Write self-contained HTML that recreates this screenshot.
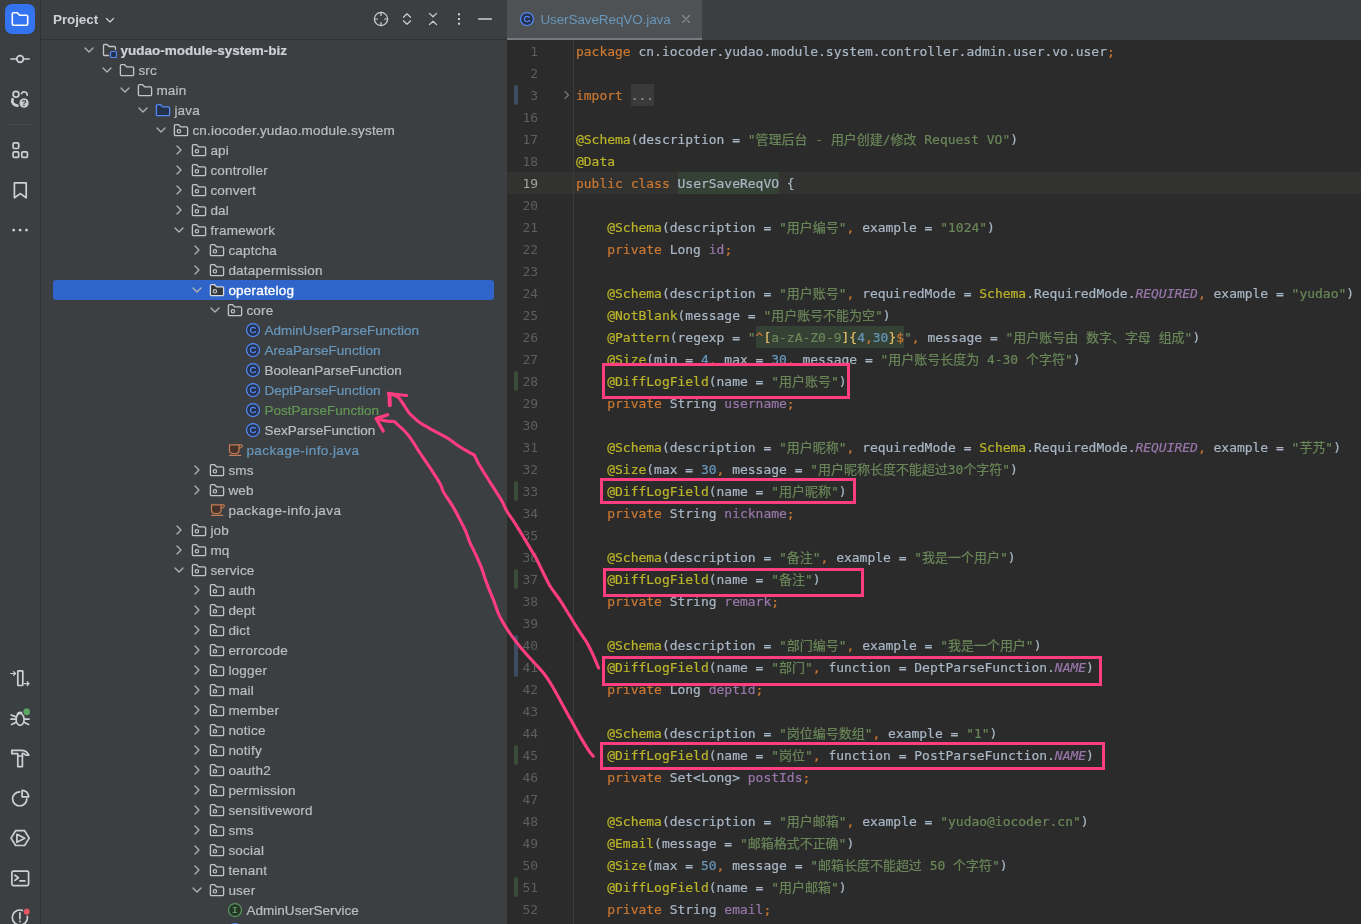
<!DOCTYPE html>
<html lang="zh"><head><meta charset="utf-8"><title>UserSaveReqVO.java</title>
<style>
html,body{margin:0;padding:0}
body{width:1361px;height:924px;overflow:hidden;background:#3c3f41;position:relative;font-family:"Liberation Sans","Noto Sans CJK SC",sans-serif;font-size:13.5px;color:#bbbdc0}
#strip{will-change:transform;position:absolute;left:0;top:0;width:40px;height:924px;background:#3c3f41;border-right:1px solid #323232}
.act{position:absolute;left:5px;top:4px;width:30px;height:30px;border-radius:7px;background:#3574f0}
.si{position:absolute;left:10px;width:20px;height:20px}
.sep{position:absolute;left:8px;top:124px;width:24px;height:1px;background:#484b4e}
#proj{will-change:transform;position:absolute;left:41px;top:0;width:466px;height:924px;background:#3c3f41;overflow:hidden}
#hdr{position:absolute;left:0;top:0;width:466px;height:39px;border-bottom:1px solid #323232}
#hdr .title{position:absolute;left:12px;top:0;line-height:39px;font-weight:bold;font-size:13.5px;color:#ced0d6;letter-spacing:-.1px}
.hi{position:absolute;top:11.4px;width:16px;height:16px;margin-left:-41px}
.row{position:absolute;left:-41px;width:560px;height:20px}
.row span{position:absolute;top:0;height:20px}
.chw{width:16px}.icw{width:16px}
.ch,.ic{position:absolute;left:0;top:2px;width:16px;height:16px}
.t{-webkit-text-stroke:.22px currentColor;line-height:22px;white-space:nowrap;color:#bbbdc0;letter-spacing:.2px}
.t.cc{letter-spacing:.04px}.t.jf{letter-spacing:.42px}
.t.b{font-weight:bold;letter-spacing:0;color:#ced0d6}
.t.blue{color:#6897bb}.t.green{color:#629755}.t.sel{color:#fff;-webkit-text-stroke:.35px #fff}
.selbg{position:absolute;left:12px;width:441px;height:20px;background:#2f65ca;border-radius:3px}
#ed{will-change:transform;position:absolute;left:507px;top:0;width:854px;height:924px;background:#2b2b2b;overflow:hidden}
#tabs{position:absolute;left:0;top:0;width:854px;height:40px;background:#3c3f41}
#tab{position:absolute;left:0;top:0;width:195px;height:38px;background:#4e5254;border-bottom:2px solid #747a80}
#tab .ic{left:12px;top:11px}
#tab .nm{position:absolute;left:33.4px;top:0;line-height:39px;color:#6897bb;letter-spacing:-.1px;white-space:nowrap}
#tab .x{position:absolute;left:172px;top:12px;width:14px;height:14px}
#curline{position:absolute;left:0;top:172px;width:854px;height:22px;background:#323330}
#vline{position:absolute;left:66px;top:40px;width:1px;height:884px;background:#3a3a3a}
.ln{position:absolute;left:0;width:31px;text-align:right;height:22px;line-height:22px;padding-top:1px;font-family:"DejaVu Sans Mono","Liberation Mono",monospace;font-size:12.97px;color:#5c5f62}
.ln.cur{color:#a4a3a3}
.vm{position:absolute;left:7.4px;width:3.5px;height:20px;border-radius:2px}
.vm.g{background:#384c38}.vm.bl{background:#3d4b63}
.cl{-webkit-text-stroke:.2px currentColor;position:absolute;left:69px;height:22px;line-height:22px;padding-top:1px;white-space:pre;font-family:"DejaVu Sans Mono","Liberation Mono","Noto Sans CJK SC",monospace;font-size:12.97px;color:#a9b7c6}
.cl.top{z-index:3}
.k{color:#cc7832}.a{color:#bbb529}.s{color:#6a8759}.n{color:#6897bb}.f{color:#9876aa}.c{color:#9876aa;font-style:italic}
.rx{background:#364135;display:inline-block;height:22px;vertical-align:top;margin-top:-1px;padding-top:1px;box-sizing:border-box}.rb{color:#e8bf6a}
.hl{background:#344134;display:inline-block;height:22px;vertical-align:top;margin-top:-1px;padding-top:1px;box-sizing:border-box}
.fold{background:#3a3a3a;color:#8c8c8c;display:inline-block;height:22px;vertical-align:top;margin-top:-1px;padding-top:1px;box-sizing:border-box}
.box{position:absolute;z-index:2;box-sizing:border-box;border:3.4px solid #ff3d7f;background:#2b2b2b;margin-left:-507px}
#arrows{position:absolute;left:0;top:0;width:1361px;height:924px;z-index:10;pointer-events:none}
.fc{position:absolute;left:52px;top:87px;width:16px;height:16px}
</style></head><body>
<div id="strip"><div class="act"></div><svg class="si" style="top:9px" viewBox="0 0 20 20" fill="none" stroke="#fff" stroke-width="1.6" stroke-linejoin="round"><path d="M2.3 5.1a1.3 1.3 0 0 1 1.3-1.3h3.7l2.3 2.4h6.8a1.3 1.3 0 0 1 1.3 1.3v7.4a1.3 1.3 0 0 1-1.3 1.3H3.6a1.3 1.3 0 0 1-1.3-1.3z"/></svg><svg class="si" style="top:49px" viewBox="0 0 20 20" fill="none" stroke="#ced0d6" stroke-width="1.7" stroke-linecap="round" stroke-linejoin="round"><circle cx="10.1" cy="10" r="3.3"/><path d="M1 10h5.6M13.6 10h5.6"/></svg><svg class="si" style="top:89px" viewBox="0 0 20 20" fill="none" stroke="#ced0d6" stroke-width="1.7" stroke-linecap="round" stroke-linejoin="round"><circle cx="6" cy="5.2" r="2.9"/><path d="M11.5 4.6A3 3 0 0 1 17.2 6.2"/><path d="M2.6 10.2C1.4 13.6 3.8 16.6 7.4 16.7" stroke-width="2.7"/><circle cx="14.1" cy="14" r="5.2" fill="#c9cbcf" stroke="#3c3f41" stroke-width="1"/><text x="14.1" y="17" text-anchor="middle" font-family="Liberation Sans, sans-serif" font-weight="bold" font-size="8.5" fill="#3c3f41" stroke="none">?</text></svg><div class="sep"></div><svg class="si" style="top:140px" viewBox="0 0 20 20" fill="none" stroke="#ced0d6" stroke-width="1.7" stroke-linecap="round" stroke-linejoin="round"><rect x="3.1" y="2.9" width="5.6" height="5.6" rx="1.2"/><rect x="3.1" y="11.8" width="5.6" height="5.6" rx="1.2"/><rect x="11.8" y="11.8" width="5.6" height="5.6" rx="1.2"/></svg><svg class="si" style="top:180px" viewBox="0 0 20 20" fill="none" stroke="#ced0d6" stroke-width="1.7" stroke-linecap="round" stroke-linejoin="round"><path d="M4.4 2.8h11.8v15l-5.9-4.2-5.9 4.2z"/></svg><svg class="si" style="top:220px" viewBox="0 0 20 20" fill="#ced0d6"><circle cx="3.7" cy="10.1" r="1.45"/><circle cx="10.1" cy="10.1" r="1.45"/><circle cx="16.5" cy="10.1" r="1.45"/></svg><svg class="si" style="top:667.5px" viewBox="0 0 20 20" fill="none" stroke="#ced0d6" stroke-width="1.7" stroke-linecap="round" stroke-linejoin="round"><rect x="7.8" y="2.9" width="5" height="14.6" rx="0.6"/><path d="M0.8 5.5h4.6M3.6 3.6l1.9 1.9-1.9 1.9" stroke-width="1.2"/><path d="M14.4 15.6h4.6M17.2 13.7l1.9 1.9-1.9 1.9" stroke-width="1.2"/></svg><svg class="si" style="top:707.5px" viewBox="0 0 20 20" fill="none" stroke="#ced0d6" stroke-width="1.7" stroke-linecap="round" stroke-linejoin="round"><ellipse cx="10.1" cy="11.4" rx="4" ry="6"/><path d="M7.4 6.4a2.9 2.9 0 0 1 4.4-1.4"/><path d="M1.2 7l4.2 1.6M1 11.2h4.6M1.6 16.4l4.2-1.9M14.8 11.2h4.2M14.6 14.5l4 1.9"/><circle cx="16.6" cy="3.8" r="3.9" fill="#5aa861" stroke="#3c3f41" stroke-width="1"/></svg><svg class="si" style="top:747.5px" viewBox="0 0 20 20" fill="none" stroke="#ced0d6" stroke-width="1.7" stroke-linecap="round" stroke-linejoin="round"><path d="M1.8 2.4h9.6c3.6 0 6 1.6 7.4 4.8h-3.2c-.8-1.4-1.8-1.8-3.2-1.8v2.6H7.8V5.6h-6z"/><path d="M7.8 8v10.6h4.6V8"/></svg><svg class="si" style="top:787.5px" viewBox="0 0 20 20" fill="none" stroke="#ced0d6" stroke-width="1.7" stroke-linecap="round" stroke-linejoin="round"><path d="M9.7 3.8A7.1 7.1 0 1 0 16.8 10.9"/><path d="M12.1 2.3A6.5 6.5 0 0 1 18.6 8.8H12.1z"/></svg><svg class="si" style="top:827.5px" viewBox="0 0 20 20" fill="none" stroke="#ced0d6" stroke-width="1.7" stroke-linecap="round" stroke-linejoin="round"><path d="M5.6 2.7h9l4.6 7.4-4.6 7.4h-9L1 10.1z"/><path d="M6.9 6.3v8l7.8-4z"/></svg><svg class="si" style="top:867.5px" viewBox="0 0 20 20" fill="none" stroke="#ced0d6" stroke-width="1.7" stroke-linecap="round" stroke-linejoin="round"><rect x="1.9" y="3.2" width="16.7" height="14.4" rx="1.5"/><path d="M4.9 7.2l3.5 2.6-3.5 2.6M10 12.9h4.8"/></svg><svg class="si" style="top:907.5px" viewBox="0 0 20 20" fill="none" stroke="#ced0d6" stroke-width="1.7" stroke-linecap="round" stroke-linejoin="round"><circle cx="9.9" cy="9.6" r="7.6"/><path d="M9.9 4.9v5.8" stroke-width="1.7"/><circle cx="9.9" cy="13.5" r="1" fill="#ced0d6" stroke="none"/><circle cx="16.8" cy="3.7" r="3.6" fill="#e55765" stroke="#3c3f41" stroke-width="1"/></svg></div>
<div id="proj">
<div id="hdr"><span class="title">Project</span>
<svg style="position:absolute;left:61px;top:12px;width:16px;height:16px" viewBox="0 0 16 16"><path d="M4.5 6.5L8 10l3.5-3.5" fill="none" stroke="#ced0d6" stroke-width="1.2" stroke-linecap="round" stroke-linejoin="round"/></svg>
<svg class="hi" style="left:373px" viewBox="0 0 16 16" fill="none" stroke="#ced0d6" stroke-width="1.2" stroke-linecap="round" stroke-linejoin="round"><circle cx="8" cy="8" r="6.6"/><path d="M8 1.4v3M8 11.6v3M1.4 8h3M11.6 8h3"/></svg><svg class="hi" style="left:399px" viewBox="0 0 16 16" fill="none" stroke="#ced0d6" stroke-width="1.2" stroke-linecap="round" stroke-linejoin="round"><path d="M4.4 6.2L8 2.8l3.6 3.4M4.4 9.8L8 13.2l3.6-3.4"/></svg><svg class="hi" style="left:425px" viewBox="0 0 16 16" fill="none" stroke="#ced0d6" stroke-width="1.2" stroke-linecap="round" stroke-linejoin="round"><path d="M4.4 2.4L8 5.8l3.6-3.4M4.4 13.6L8 10.2l3.6 3.4"/></svg><svg class="hi" style="left:451.2px" viewBox="0 0 16 16" fill="#ced0d6"><rect x="7" y="2.3" width="2" height="2"/><rect x="7" y="7" width="2" height="2"/><rect x="7" y="11.7" width="2" height="2"/></svg><svg class="hi" style="left:477px" viewBox="0 0 16 16" fill="none" stroke="#ced0d6" stroke-width="1.3" stroke-linecap="round" stroke-linejoin="round"><path d="M1.6 8h12.8"/></svg></div>
<div class="row" style="top:40px"><span class="chw" style="left:80.7px"><svg class="ch" viewBox="0 0 16 16"><path d="M4 6l4 4 4-4" fill="none" stroke="#aeb0b4" stroke-width="1.35" stroke-linecap="round" stroke-linejoin="round"/></svg></span><span class="icw" style="left:101.3px"><svg class="ic" viewBox="0 0 16 16"><path d="M8 13.5H3.5a1 1 0 0 1-1-1v-9a1 1 0 0 1 1-1h2.7l1.9 2h5.4a1 1 0 0 1 1 1V8" fill="none" stroke="#c3c5c9" stroke-width="1.3" stroke-linejoin="round"/><rect x="9.5" y="9.5" width="6" height="6" rx="1.2" fill="#25324d" stroke="#548af7" stroke-width="1.2"/></svg></span><span class="t b" style="left:120.4px">yudao-module-system-biz</span></div>
<div class="row" style="top:60px"><span class="chw" style="left:98.7px"><svg class="ch" viewBox="0 0 16 16"><path d="M4 6l4 4 4-4" fill="none" stroke="#aeb0b4" stroke-width="1.35" stroke-linecap="round" stroke-linejoin="round"/></svg></span><span class="icw" style="left:119.3px"><svg class="ic" viewBox="0 0 16 16"><path d="M1.4 3.9a1.2 1.2 0 0 1 1.2-1.2h3l2 2.2h5.8a1.2 1.2 0 0 1 1.2 1.2v6.3a1.2 1.2 0 0 1-1.2 1.2H2.6a1.2 1.2 0 0 1-1.2-1.2z" fill="none" stroke="#c3c5c9" stroke-width="1.3" stroke-linejoin="round"/></svg></span><span class="t" style="left:138.4px">src</span></div>
<div class="row" style="top:80px"><span class="chw" style="left:116.7px"><svg class="ch" viewBox="0 0 16 16"><path d="M4 6l4 4 4-4" fill="none" stroke="#aeb0b4" stroke-width="1.35" stroke-linecap="round" stroke-linejoin="round"/></svg></span><span class="icw" style="left:137.3px"><svg class="ic" viewBox="0 0 16 16"><path d="M1.4 3.9a1.2 1.2 0 0 1 1.2-1.2h3l2 2.2h5.8a1.2 1.2 0 0 1 1.2 1.2v6.3a1.2 1.2 0 0 1-1.2 1.2H2.6a1.2 1.2 0 0 1-1.2-1.2z" fill="none" stroke="#c3c5c9" stroke-width="1.3" stroke-linejoin="round"/></svg></span><span class="t" style="left:156.4px">main</span></div>
<div class="row" style="top:100px"><span class="chw" style="left:134.7px"><svg class="ch" viewBox="0 0 16 16"><path d="M4 6l4 4 4-4" fill="none" stroke="#aeb0b4" stroke-width="1.35" stroke-linecap="round" stroke-linejoin="round"/></svg></span><span class="icw" style="left:155.3px"><svg class="ic" viewBox="0 0 16 16"><path d="M1.4 3.9a1.2 1.2 0 0 1 1.2-1.2h3l2 2.2h5.8a1.2 1.2 0 0 1 1.2 1.2v6.3a1.2 1.2 0 0 1-1.2 1.2H2.6a1.2 1.2 0 0 1-1.2-1.2z" fill="#25324d" stroke="#548af7" stroke-width="1.3" stroke-linejoin="round"/></svg></span><span class="t" style="left:174.4px">java</span></div>
<div class="row" style="top:120px"><span class="chw" style="left:152.7px"><svg class="ch" viewBox="0 0 16 16"><path d="M4 6l4 4 4-4" fill="none" stroke="#aeb0b4" stroke-width="1.35" stroke-linecap="round" stroke-linejoin="round"/></svg></span><span class="icw" style="left:173.3px"><svg class="ic" viewBox="0 0 16 16"><path d="M1.4 3.9a1.2 1.2 0 0 1 1.2-1.2h3l2 2.2h5.8a1.2 1.2 0 0 1 1.2 1.2v6.3a1.2 1.2 0 0 1-1.2 1.2H2.6a1.2 1.2 0 0 1-1.2-1.2z" fill="none" stroke="#c3c5c9" stroke-width="1.3" stroke-linejoin="round"/><circle cx="5.9" cy="9.3" r="1.7" fill="none" stroke="#c3c5c9" stroke-width="1.2"/></svg></span><span class="t" style="left:192.4px">cn.iocoder.yudao.module.system</span></div>
<div class="row" style="top:140px"><span class="chw" style="left:170.7px"><svg class="ch" viewBox="0 0 16 16"><path d="M6 4l4 4-4 4" fill="none" stroke="#aeb0b4" stroke-width="1.35" stroke-linecap="round" stroke-linejoin="round"/></svg></span><span class="icw" style="left:191.3px"><svg class="ic" viewBox="0 0 16 16"><path d="M1.4 3.9a1.2 1.2 0 0 1 1.2-1.2h3l2 2.2h5.8a1.2 1.2 0 0 1 1.2 1.2v6.3a1.2 1.2 0 0 1-1.2 1.2H2.6a1.2 1.2 0 0 1-1.2-1.2z" fill="none" stroke="#c3c5c9" stroke-width="1.3" stroke-linejoin="round"/><circle cx="5.9" cy="9.3" r="1.7" fill="none" stroke="#c3c5c9" stroke-width="1.2"/></svg></span><span class="t" style="left:210.4px">api</span></div>
<div class="row" style="top:160px"><span class="chw" style="left:170.7px"><svg class="ch" viewBox="0 0 16 16"><path d="M6 4l4 4-4 4" fill="none" stroke="#aeb0b4" stroke-width="1.35" stroke-linecap="round" stroke-linejoin="round"/></svg></span><span class="icw" style="left:191.3px"><svg class="ic" viewBox="0 0 16 16"><path d="M1.4 3.9a1.2 1.2 0 0 1 1.2-1.2h3l2 2.2h5.8a1.2 1.2 0 0 1 1.2 1.2v6.3a1.2 1.2 0 0 1-1.2 1.2H2.6a1.2 1.2 0 0 1-1.2-1.2z" fill="none" stroke="#c3c5c9" stroke-width="1.3" stroke-linejoin="round"/><circle cx="5.9" cy="9.3" r="1.7" fill="none" stroke="#c3c5c9" stroke-width="1.2"/></svg></span><span class="t" style="left:210.4px">controller</span></div>
<div class="row" style="top:180px"><span class="chw" style="left:170.7px"><svg class="ch" viewBox="0 0 16 16"><path d="M6 4l4 4-4 4" fill="none" stroke="#aeb0b4" stroke-width="1.35" stroke-linecap="round" stroke-linejoin="round"/></svg></span><span class="icw" style="left:191.3px"><svg class="ic" viewBox="0 0 16 16"><path d="M1.4 3.9a1.2 1.2 0 0 1 1.2-1.2h3l2 2.2h5.8a1.2 1.2 0 0 1 1.2 1.2v6.3a1.2 1.2 0 0 1-1.2 1.2H2.6a1.2 1.2 0 0 1-1.2-1.2z" fill="none" stroke="#c3c5c9" stroke-width="1.3" stroke-linejoin="round"/><circle cx="5.9" cy="9.3" r="1.7" fill="none" stroke="#c3c5c9" stroke-width="1.2"/></svg></span><span class="t" style="left:210.4px">convert</span></div>
<div class="row" style="top:200px"><span class="chw" style="left:170.7px"><svg class="ch" viewBox="0 0 16 16"><path d="M6 4l4 4-4 4" fill="none" stroke="#aeb0b4" stroke-width="1.35" stroke-linecap="round" stroke-linejoin="round"/></svg></span><span class="icw" style="left:191.3px"><svg class="ic" viewBox="0 0 16 16"><path d="M1.4 3.9a1.2 1.2 0 0 1 1.2-1.2h3l2 2.2h5.8a1.2 1.2 0 0 1 1.2 1.2v6.3a1.2 1.2 0 0 1-1.2 1.2H2.6a1.2 1.2 0 0 1-1.2-1.2z" fill="none" stroke="#c3c5c9" stroke-width="1.3" stroke-linejoin="round"/><circle cx="5.9" cy="9.3" r="1.7" fill="none" stroke="#c3c5c9" stroke-width="1.2"/></svg></span><span class="t" style="left:210.4px">dal</span></div>
<div class="row" style="top:220px"><span class="chw" style="left:170.7px"><svg class="ch" viewBox="0 0 16 16"><path d="M4 6l4 4 4-4" fill="none" stroke="#aeb0b4" stroke-width="1.35" stroke-linecap="round" stroke-linejoin="round"/></svg></span><span class="icw" style="left:191.3px"><svg class="ic" viewBox="0 0 16 16"><path d="M1.4 3.9a1.2 1.2 0 0 1 1.2-1.2h3l2 2.2h5.8a1.2 1.2 0 0 1 1.2 1.2v6.3a1.2 1.2 0 0 1-1.2 1.2H2.6a1.2 1.2 0 0 1-1.2-1.2z" fill="none" stroke="#c3c5c9" stroke-width="1.3" stroke-linejoin="round"/><circle cx="5.9" cy="9.3" r="1.7" fill="none" stroke="#c3c5c9" stroke-width="1.2"/></svg></span><span class="t" style="left:210.4px">framework</span></div>
<div class="row" style="top:240px"><span class="chw" style="left:188.7px"><svg class="ch" viewBox="0 0 16 16"><path d="M6 4l4 4-4 4" fill="none" stroke="#aeb0b4" stroke-width="1.35" stroke-linecap="round" stroke-linejoin="round"/></svg></span><span class="icw" style="left:209.3px"><svg class="ic" viewBox="0 0 16 16"><path d="M1.4 3.9a1.2 1.2 0 0 1 1.2-1.2h3l2 2.2h5.8a1.2 1.2 0 0 1 1.2 1.2v6.3a1.2 1.2 0 0 1-1.2 1.2H2.6a1.2 1.2 0 0 1-1.2-1.2z" fill="none" stroke="#c3c5c9" stroke-width="1.3" stroke-linejoin="round"/><circle cx="5.9" cy="9.3" r="1.7" fill="none" stroke="#c3c5c9" stroke-width="1.2"/></svg></span><span class="t" style="left:228.4px">captcha</span></div>
<div class="row" style="top:260px"><span class="chw" style="left:188.7px"><svg class="ch" viewBox="0 0 16 16"><path d="M6 4l4 4-4 4" fill="none" stroke="#aeb0b4" stroke-width="1.35" stroke-linecap="round" stroke-linejoin="round"/></svg></span><span class="icw" style="left:209.3px"><svg class="ic" viewBox="0 0 16 16"><path d="M1.4 3.9a1.2 1.2 0 0 1 1.2-1.2h3l2 2.2h5.8a1.2 1.2 0 0 1 1.2 1.2v6.3a1.2 1.2 0 0 1-1.2 1.2H2.6a1.2 1.2 0 0 1-1.2-1.2z" fill="none" stroke="#c3c5c9" stroke-width="1.3" stroke-linejoin="round"/><circle cx="5.9" cy="9.3" r="1.7" fill="none" stroke="#c3c5c9" stroke-width="1.2"/></svg></span><span class="t" style="left:228.4px">datapermission</span></div>
<div class="selbg" style="top:280px"></div>
<div class="row" style="top:280px"><span class="chw" style="left:188.7px"><svg class="ch" viewBox="0 0 16 16"><path d="M4 6l4 4 4-4" fill="none" stroke="#aeb0b4" stroke-width="1.35" stroke-linecap="round" stroke-linejoin="round"/></svg></span><span class="icw" style="left:209.3px"><svg class="ic" viewBox="0 0 16 16"><path d="M1.4 3.9a1.2 1.2 0 0 1 1.2-1.2h3l2 2.2h5.8a1.2 1.2 0 0 1 1.2 1.2v6.3a1.2 1.2 0 0 1-1.2 1.2H2.6a1.2 1.2 0 0 1-1.2-1.2z" fill="#35383b" stroke="#d8dade" stroke-width="1.3" stroke-linejoin="round"/><circle cx="5.9" cy="9.3" r="1.7" fill="none" stroke="#c3c5c9" stroke-width="1.2"/></svg></span><span class="t sel" style="left:228.4px">operatelog</span></div>
<div class="row" style="top:300px"><span class="chw" style="left:206.7px"><svg class="ch" viewBox="0 0 16 16"><path d="M4 6l4 4 4-4" fill="none" stroke="#aeb0b4" stroke-width="1.35" stroke-linecap="round" stroke-linejoin="round"/></svg></span><span class="icw" style="left:227.3px"><svg class="ic" viewBox="0 0 16 16"><path d="M1.4 3.9a1.2 1.2 0 0 1 1.2-1.2h3l2 2.2h5.8a1.2 1.2 0 0 1 1.2 1.2v6.3a1.2 1.2 0 0 1-1.2 1.2H2.6a1.2 1.2 0 0 1-1.2-1.2z" fill="none" stroke="#c3c5c9" stroke-width="1.3" stroke-linejoin="round"/><circle cx="5.9" cy="9.3" r="1.7" fill="none" stroke="#c3c5c9" stroke-width="1.2"/></svg></span><span class="t" style="left:246.4px">core</span></div>
<div class="row" style="top:320px"><span class="icw" style="left:245.3px"><svg class="ic" viewBox="0 0 16 16"><circle cx="8" cy="8" r="6.5" fill="#25324d" stroke="#548af7" stroke-width="1.25"/><text x="8" y="11.4" text-anchor="middle" font-family="Liberation Sans, sans-serif" font-size="9.6" stroke="#548af7" stroke-width="0.35" fill="#548af7">C</text></svg></span><span class="t blue cc" style="left:264.4px">AdminUserParseFunction</span></div>
<div class="row" style="top:340px"><span class="icw" style="left:245.3px"><svg class="ic" viewBox="0 0 16 16"><circle cx="8" cy="8" r="6.5" fill="#25324d" stroke="#548af7" stroke-width="1.25"/><text x="8" y="11.4" text-anchor="middle" font-family="Liberation Sans, sans-serif" font-size="9.6" stroke="#548af7" stroke-width="0.35" fill="#548af7">C</text></svg></span><span class="t blue cc" style="left:264.4px">AreaParseFunction</span></div>
<div class="row" style="top:360px"><span class="icw" style="left:245.3px"><svg class="ic" viewBox="0 0 16 16"><circle cx="8" cy="8" r="6.5" fill="#25324d" stroke="#548af7" stroke-width="1.25"/><text x="8" y="11.4" text-anchor="middle" font-family="Liberation Sans, sans-serif" font-size="9.6" stroke="#548af7" stroke-width="0.35" fill="#548af7">C</text></svg></span><span class="t cc" style="left:264.4px">BooleanParseFunction</span></div>
<div class="row" style="top:380px"><span class="icw" style="left:245.3px"><svg class="ic" viewBox="0 0 16 16"><circle cx="8" cy="8" r="6.5" fill="#25324d" stroke="#548af7" stroke-width="1.25"/><text x="8" y="11.4" text-anchor="middle" font-family="Liberation Sans, sans-serif" font-size="9.6" stroke="#548af7" stroke-width="0.35" fill="#548af7">C</text></svg></span><span class="t blue cc" style="left:264.4px">DeptParseFunction</span></div>
<div class="row" style="top:400px"><span class="icw" style="left:245.3px"><svg class="ic" viewBox="0 0 16 16"><circle cx="8" cy="8" r="6.5" fill="#25324d" stroke="#548af7" stroke-width="1.25"/><text x="8" y="11.4" text-anchor="middle" font-family="Liberation Sans, sans-serif" font-size="9.6" stroke="#548af7" stroke-width="0.35" fill="#548af7">C</text></svg></span><span class="t green cc" style="left:264.4px">PostParseFunction</span></div>
<div class="row" style="top:420px"><span class="icw" style="left:245.3px"><svg class="ic" viewBox="0 0 16 16"><circle cx="8" cy="8" r="6.5" fill="#25324d" stroke="#548af7" stroke-width="1.25"/><text x="8" y="11.4" text-anchor="middle" font-family="Liberation Sans, sans-serif" font-size="9.6" stroke="#548af7" stroke-width="0.35" fill="#548af7">C</text></svg></span><span class="t cc" style="left:264.4px">SexParseFunction</span></div>
<div class="row" style="top:440px"><span class="icw" style="left:227.3px"><svg class="ic" viewBox="0 0 16 16"><path d="M2.5 2.8h9.5v5.3a3.4 3.4 0 0 1-3.4 3.4H5.900a3.400 3.400 0 0 1-3.400-3.400z" fill="#45322b" stroke="#c77d55" stroke-width="1.2" stroke-linejoin="round"/><path d="M12 2.900h2.300a1.100 1.100 0 0 1 1 1.500c-.400 1.100-1.500 1.700-3.300 1.700" fill="none" stroke="#c77d55" stroke-width="1.1"/><path d="M2.600 13.400h11" stroke="#c77d55" stroke-width="1.2" stroke-linecap="round"/></svg></span><span class="t blue jf" style="left:246.4px">package-info.java</span></div>
<div class="row" style="top:460px"><span class="chw" style="left:188.7px"><svg class="ch" viewBox="0 0 16 16"><path d="M6 4l4 4-4 4" fill="none" stroke="#aeb0b4" stroke-width="1.35" stroke-linecap="round" stroke-linejoin="round"/></svg></span><span class="icw" style="left:209.3px"><svg class="ic" viewBox="0 0 16 16"><path d="M1.4 3.9a1.2 1.2 0 0 1 1.2-1.2h3l2 2.2h5.8a1.2 1.2 0 0 1 1.2 1.2v6.3a1.2 1.2 0 0 1-1.2 1.2H2.6a1.2 1.2 0 0 1-1.2-1.2z" fill="none" stroke="#c3c5c9" stroke-width="1.3" stroke-linejoin="round"/><circle cx="5.9" cy="9.3" r="1.7" fill="none" stroke="#c3c5c9" stroke-width="1.2"/></svg></span><span class="t" style="left:228.4px">sms</span></div>
<div class="row" style="top:480px"><span class="chw" style="left:188.7px"><svg class="ch" viewBox="0 0 16 16"><path d="M6 4l4 4-4 4" fill="none" stroke="#aeb0b4" stroke-width="1.35" stroke-linecap="round" stroke-linejoin="round"/></svg></span><span class="icw" style="left:209.3px"><svg class="ic" viewBox="0 0 16 16"><path d="M1.4 3.9a1.2 1.2 0 0 1 1.2-1.2h3l2 2.2h5.8a1.2 1.2 0 0 1 1.2 1.2v6.3a1.2 1.2 0 0 1-1.2 1.2H2.6a1.2 1.2 0 0 1-1.2-1.2z" fill="none" stroke="#c3c5c9" stroke-width="1.3" stroke-linejoin="round"/><circle cx="5.9" cy="9.3" r="1.7" fill="none" stroke="#c3c5c9" stroke-width="1.2"/></svg></span><span class="t" style="left:228.4px">web</span></div>
<div class="row" style="top:500px"><span class="icw" style="left:209.3px"><svg class="ic" viewBox="0 0 16 16"><path d="M2.5 2.8h9.5v5.3a3.4 3.4 0 0 1-3.4 3.4H5.900a3.400 3.400 0 0 1-3.400-3.400z" fill="#45322b" stroke="#c77d55" stroke-width="1.2" stroke-linejoin="round"/><path d="M12 2.900h2.300a1.100 1.100 0 0 1 1 1.500c-.400 1.100-1.500 1.700-3.300 1.700" fill="none" stroke="#c77d55" stroke-width="1.1"/><path d="M2.600 13.400h11" stroke="#c77d55" stroke-width="1.2" stroke-linecap="round"/></svg></span><span class="t jf" style="left:228.4px">package-info.java</span></div>
<div class="row" style="top:520px"><span class="chw" style="left:170.7px"><svg class="ch" viewBox="0 0 16 16"><path d="M6 4l4 4-4 4" fill="none" stroke="#aeb0b4" stroke-width="1.35" stroke-linecap="round" stroke-linejoin="round"/></svg></span><span class="icw" style="left:191.3px"><svg class="ic" viewBox="0 0 16 16"><path d="M1.4 3.9a1.2 1.2 0 0 1 1.2-1.2h3l2 2.2h5.8a1.2 1.2 0 0 1 1.2 1.2v6.3a1.2 1.2 0 0 1-1.2 1.2H2.6a1.2 1.2 0 0 1-1.2-1.2z" fill="none" stroke="#c3c5c9" stroke-width="1.3" stroke-linejoin="round"/><circle cx="5.9" cy="9.3" r="1.7" fill="none" stroke="#c3c5c9" stroke-width="1.2"/></svg></span><span class="t" style="left:210.4px">job</span></div>
<div class="row" style="top:540px"><span class="chw" style="left:170.7px"><svg class="ch" viewBox="0 0 16 16"><path d="M6 4l4 4-4 4" fill="none" stroke="#aeb0b4" stroke-width="1.35" stroke-linecap="round" stroke-linejoin="round"/></svg></span><span class="icw" style="left:191.3px"><svg class="ic" viewBox="0 0 16 16"><path d="M1.4 3.9a1.2 1.2 0 0 1 1.2-1.2h3l2 2.2h5.8a1.2 1.2 0 0 1 1.2 1.2v6.3a1.2 1.2 0 0 1-1.2 1.2H2.6a1.2 1.2 0 0 1-1.2-1.2z" fill="none" stroke="#c3c5c9" stroke-width="1.3" stroke-linejoin="round"/><circle cx="5.9" cy="9.3" r="1.7" fill="none" stroke="#c3c5c9" stroke-width="1.2"/></svg></span><span class="t" style="left:210.4px">mq</span></div>
<div class="row" style="top:560px"><span class="chw" style="left:170.7px"><svg class="ch" viewBox="0 0 16 16"><path d="M4 6l4 4 4-4" fill="none" stroke="#aeb0b4" stroke-width="1.35" stroke-linecap="round" stroke-linejoin="round"/></svg></span><span class="icw" style="left:191.3px"><svg class="ic" viewBox="0 0 16 16"><path d="M1.4 3.9a1.2 1.2 0 0 1 1.2-1.2h3l2 2.2h5.8a1.2 1.2 0 0 1 1.2 1.2v6.3a1.2 1.2 0 0 1-1.2 1.2H2.6a1.2 1.2 0 0 1-1.2-1.2z" fill="none" stroke="#c3c5c9" stroke-width="1.3" stroke-linejoin="round"/><circle cx="5.9" cy="9.3" r="1.7" fill="none" stroke="#c3c5c9" stroke-width="1.2"/></svg></span><span class="t" style="left:210.4px">service</span></div>
<div class="row" style="top:580px"><span class="chw" style="left:188.7px"><svg class="ch" viewBox="0 0 16 16"><path d="M6 4l4 4-4 4" fill="none" stroke="#aeb0b4" stroke-width="1.35" stroke-linecap="round" stroke-linejoin="round"/></svg></span><span class="icw" style="left:209.3px"><svg class="ic" viewBox="0 0 16 16"><path d="M1.4 3.9a1.2 1.2 0 0 1 1.2-1.2h3l2 2.2h5.8a1.2 1.2 0 0 1 1.2 1.2v6.3a1.2 1.2 0 0 1-1.2 1.2H2.6a1.2 1.2 0 0 1-1.2-1.2z" fill="none" stroke="#c3c5c9" stroke-width="1.3" stroke-linejoin="round"/><circle cx="5.9" cy="9.3" r="1.7" fill="none" stroke="#c3c5c9" stroke-width="1.2"/></svg></span><span class="t" style="left:228.4px">auth</span></div>
<div class="row" style="top:600px"><span class="chw" style="left:188.7px"><svg class="ch" viewBox="0 0 16 16"><path d="M6 4l4 4-4 4" fill="none" stroke="#aeb0b4" stroke-width="1.35" stroke-linecap="round" stroke-linejoin="round"/></svg></span><span class="icw" style="left:209.3px"><svg class="ic" viewBox="0 0 16 16"><path d="M1.4 3.9a1.2 1.2 0 0 1 1.2-1.2h3l2 2.2h5.8a1.2 1.2 0 0 1 1.2 1.2v6.3a1.2 1.2 0 0 1-1.2 1.2H2.6a1.2 1.2 0 0 1-1.2-1.2z" fill="none" stroke="#c3c5c9" stroke-width="1.3" stroke-linejoin="round"/><circle cx="5.9" cy="9.3" r="1.7" fill="none" stroke="#c3c5c9" stroke-width="1.2"/></svg></span><span class="t" style="left:228.4px">dept</span></div>
<div class="row" style="top:620px"><span class="chw" style="left:188.7px"><svg class="ch" viewBox="0 0 16 16"><path d="M6 4l4 4-4 4" fill="none" stroke="#aeb0b4" stroke-width="1.35" stroke-linecap="round" stroke-linejoin="round"/></svg></span><span class="icw" style="left:209.3px"><svg class="ic" viewBox="0 0 16 16"><path d="M1.4 3.9a1.2 1.2 0 0 1 1.2-1.2h3l2 2.2h5.8a1.2 1.2 0 0 1 1.2 1.2v6.3a1.2 1.2 0 0 1-1.2 1.2H2.6a1.2 1.2 0 0 1-1.2-1.2z" fill="none" stroke="#c3c5c9" stroke-width="1.3" stroke-linejoin="round"/><circle cx="5.9" cy="9.3" r="1.7" fill="none" stroke="#c3c5c9" stroke-width="1.2"/></svg></span><span class="t" style="left:228.4px">dict</span></div>
<div class="row" style="top:640px"><span class="chw" style="left:188.7px"><svg class="ch" viewBox="0 0 16 16"><path d="M6 4l4 4-4 4" fill="none" stroke="#aeb0b4" stroke-width="1.35" stroke-linecap="round" stroke-linejoin="round"/></svg></span><span class="icw" style="left:209.3px"><svg class="ic" viewBox="0 0 16 16"><path d="M1.4 3.9a1.2 1.2 0 0 1 1.2-1.2h3l2 2.2h5.8a1.2 1.2 0 0 1 1.2 1.2v6.3a1.2 1.2 0 0 1-1.2 1.2H2.6a1.2 1.2 0 0 1-1.2-1.2z" fill="none" stroke="#c3c5c9" stroke-width="1.3" stroke-linejoin="round"/><circle cx="5.9" cy="9.3" r="1.7" fill="none" stroke="#c3c5c9" stroke-width="1.2"/></svg></span><span class="t" style="left:228.4px">errorcode</span></div>
<div class="row" style="top:660px"><span class="chw" style="left:188.7px"><svg class="ch" viewBox="0 0 16 16"><path d="M6 4l4 4-4 4" fill="none" stroke="#aeb0b4" stroke-width="1.35" stroke-linecap="round" stroke-linejoin="round"/></svg></span><span class="icw" style="left:209.3px"><svg class="ic" viewBox="0 0 16 16"><path d="M1.4 3.9a1.2 1.2 0 0 1 1.2-1.2h3l2 2.2h5.8a1.2 1.2 0 0 1 1.2 1.2v6.3a1.2 1.2 0 0 1-1.2 1.2H2.6a1.2 1.2 0 0 1-1.2-1.2z" fill="none" stroke="#c3c5c9" stroke-width="1.3" stroke-linejoin="round"/><circle cx="5.9" cy="9.3" r="1.7" fill="none" stroke="#c3c5c9" stroke-width="1.2"/></svg></span><span class="t" style="left:228.4px">logger</span></div>
<div class="row" style="top:680px"><span class="chw" style="left:188.7px"><svg class="ch" viewBox="0 0 16 16"><path d="M6 4l4 4-4 4" fill="none" stroke="#aeb0b4" stroke-width="1.35" stroke-linecap="round" stroke-linejoin="round"/></svg></span><span class="icw" style="left:209.3px"><svg class="ic" viewBox="0 0 16 16"><path d="M1.4 3.9a1.2 1.2 0 0 1 1.2-1.2h3l2 2.2h5.8a1.2 1.2 0 0 1 1.2 1.2v6.3a1.2 1.2 0 0 1-1.2 1.2H2.6a1.2 1.2 0 0 1-1.2-1.2z" fill="none" stroke="#c3c5c9" stroke-width="1.3" stroke-linejoin="round"/><circle cx="5.9" cy="9.3" r="1.7" fill="none" stroke="#c3c5c9" stroke-width="1.2"/></svg></span><span class="t" style="left:228.4px">mail</span></div>
<div class="row" style="top:700px"><span class="chw" style="left:188.7px"><svg class="ch" viewBox="0 0 16 16"><path d="M6 4l4 4-4 4" fill="none" stroke="#aeb0b4" stroke-width="1.35" stroke-linecap="round" stroke-linejoin="round"/></svg></span><span class="icw" style="left:209.3px"><svg class="ic" viewBox="0 0 16 16"><path d="M1.4 3.9a1.2 1.2 0 0 1 1.2-1.2h3l2 2.2h5.8a1.2 1.2 0 0 1 1.2 1.2v6.3a1.2 1.2 0 0 1-1.2 1.2H2.6a1.2 1.2 0 0 1-1.2-1.2z" fill="none" stroke="#c3c5c9" stroke-width="1.3" stroke-linejoin="round"/><circle cx="5.9" cy="9.3" r="1.7" fill="none" stroke="#c3c5c9" stroke-width="1.2"/></svg></span><span class="t" style="left:228.4px">member</span></div>
<div class="row" style="top:720px"><span class="chw" style="left:188.7px"><svg class="ch" viewBox="0 0 16 16"><path d="M6 4l4 4-4 4" fill="none" stroke="#aeb0b4" stroke-width="1.35" stroke-linecap="round" stroke-linejoin="round"/></svg></span><span class="icw" style="left:209.3px"><svg class="ic" viewBox="0 0 16 16"><path d="M1.4 3.9a1.2 1.2 0 0 1 1.2-1.2h3l2 2.2h5.8a1.2 1.2 0 0 1 1.2 1.2v6.3a1.2 1.2 0 0 1-1.2 1.2H2.6a1.2 1.2 0 0 1-1.2-1.2z" fill="none" stroke="#c3c5c9" stroke-width="1.3" stroke-linejoin="round"/><circle cx="5.9" cy="9.3" r="1.7" fill="none" stroke="#c3c5c9" stroke-width="1.2"/></svg></span><span class="t" style="left:228.4px">notice</span></div>
<div class="row" style="top:740px"><span class="chw" style="left:188.7px"><svg class="ch" viewBox="0 0 16 16"><path d="M6 4l4 4-4 4" fill="none" stroke="#aeb0b4" stroke-width="1.35" stroke-linecap="round" stroke-linejoin="round"/></svg></span><span class="icw" style="left:209.3px"><svg class="ic" viewBox="0 0 16 16"><path d="M1.4 3.9a1.2 1.2 0 0 1 1.2-1.2h3l2 2.2h5.8a1.2 1.2 0 0 1 1.2 1.2v6.3a1.2 1.2 0 0 1-1.2 1.2H2.6a1.2 1.2 0 0 1-1.2-1.2z" fill="none" stroke="#c3c5c9" stroke-width="1.3" stroke-linejoin="round"/><circle cx="5.9" cy="9.3" r="1.7" fill="none" stroke="#c3c5c9" stroke-width="1.2"/></svg></span><span class="t" style="left:228.4px">notify</span></div>
<div class="row" style="top:760px"><span class="chw" style="left:188.7px"><svg class="ch" viewBox="0 0 16 16"><path d="M6 4l4 4-4 4" fill="none" stroke="#aeb0b4" stroke-width="1.35" stroke-linecap="round" stroke-linejoin="round"/></svg></span><span class="icw" style="left:209.3px"><svg class="ic" viewBox="0 0 16 16"><path d="M1.4 3.9a1.2 1.2 0 0 1 1.2-1.2h3l2 2.2h5.8a1.2 1.2 0 0 1 1.2 1.2v6.3a1.2 1.2 0 0 1-1.2 1.2H2.6a1.2 1.2 0 0 1-1.2-1.2z" fill="none" stroke="#c3c5c9" stroke-width="1.3" stroke-linejoin="round"/><circle cx="5.9" cy="9.3" r="1.7" fill="none" stroke="#c3c5c9" stroke-width="1.2"/></svg></span><span class="t" style="left:228.4px">oauth2</span></div>
<div class="row" style="top:780px"><span class="chw" style="left:188.7px"><svg class="ch" viewBox="0 0 16 16"><path d="M6 4l4 4-4 4" fill="none" stroke="#aeb0b4" stroke-width="1.35" stroke-linecap="round" stroke-linejoin="round"/></svg></span><span class="icw" style="left:209.3px"><svg class="ic" viewBox="0 0 16 16"><path d="M1.4 3.9a1.2 1.2 0 0 1 1.2-1.2h3l2 2.2h5.8a1.2 1.2 0 0 1 1.2 1.2v6.3a1.2 1.2 0 0 1-1.2 1.2H2.6a1.2 1.2 0 0 1-1.2-1.2z" fill="none" stroke="#c3c5c9" stroke-width="1.3" stroke-linejoin="round"/><circle cx="5.9" cy="9.3" r="1.7" fill="none" stroke="#c3c5c9" stroke-width="1.2"/></svg></span><span class="t" style="left:228.4px">permission</span></div>
<div class="row" style="top:800px"><span class="chw" style="left:188.7px"><svg class="ch" viewBox="0 0 16 16"><path d="M6 4l4 4-4 4" fill="none" stroke="#aeb0b4" stroke-width="1.35" stroke-linecap="round" stroke-linejoin="round"/></svg></span><span class="icw" style="left:209.3px"><svg class="ic" viewBox="0 0 16 16"><path d="M1.4 3.9a1.2 1.2 0 0 1 1.2-1.2h3l2 2.2h5.8a1.2 1.2 0 0 1 1.2 1.2v6.3a1.2 1.2 0 0 1-1.2 1.2H2.6a1.2 1.2 0 0 1-1.2-1.2z" fill="none" stroke="#c3c5c9" stroke-width="1.3" stroke-linejoin="round"/><circle cx="5.9" cy="9.3" r="1.7" fill="none" stroke="#c3c5c9" stroke-width="1.2"/></svg></span><span class="t" style="left:228.4px">sensitiveword</span></div>
<div class="row" style="top:820px"><span class="chw" style="left:188.7px"><svg class="ch" viewBox="0 0 16 16"><path d="M6 4l4 4-4 4" fill="none" stroke="#aeb0b4" stroke-width="1.35" stroke-linecap="round" stroke-linejoin="round"/></svg></span><span class="icw" style="left:209.3px"><svg class="ic" viewBox="0 0 16 16"><path d="M1.4 3.9a1.2 1.2 0 0 1 1.2-1.2h3l2 2.2h5.8a1.2 1.2 0 0 1 1.2 1.2v6.3a1.2 1.2 0 0 1-1.2 1.2H2.6a1.2 1.2 0 0 1-1.2-1.2z" fill="none" stroke="#c3c5c9" stroke-width="1.3" stroke-linejoin="round"/><circle cx="5.9" cy="9.3" r="1.7" fill="none" stroke="#c3c5c9" stroke-width="1.2"/></svg></span><span class="t" style="left:228.4px">sms</span></div>
<div class="row" style="top:840px"><span class="chw" style="left:188.7px"><svg class="ch" viewBox="0 0 16 16"><path d="M6 4l4 4-4 4" fill="none" stroke="#aeb0b4" stroke-width="1.35" stroke-linecap="round" stroke-linejoin="round"/></svg></span><span class="icw" style="left:209.3px"><svg class="ic" viewBox="0 0 16 16"><path d="M1.4 3.9a1.2 1.2 0 0 1 1.2-1.2h3l2 2.2h5.8a1.2 1.2 0 0 1 1.2 1.2v6.3a1.2 1.2 0 0 1-1.2 1.2H2.6a1.2 1.2 0 0 1-1.2-1.2z" fill="none" stroke="#c3c5c9" stroke-width="1.3" stroke-linejoin="round"/><circle cx="5.9" cy="9.3" r="1.7" fill="none" stroke="#c3c5c9" stroke-width="1.2"/></svg></span><span class="t" style="left:228.4px">social</span></div>
<div class="row" style="top:860px"><span class="chw" style="left:188.7px"><svg class="ch" viewBox="0 0 16 16"><path d="M6 4l4 4-4 4" fill="none" stroke="#aeb0b4" stroke-width="1.35" stroke-linecap="round" stroke-linejoin="round"/></svg></span><span class="icw" style="left:209.3px"><svg class="ic" viewBox="0 0 16 16"><path d="M1.4 3.9a1.2 1.2 0 0 1 1.2-1.2h3l2 2.2h5.8a1.2 1.2 0 0 1 1.2 1.2v6.3a1.2 1.2 0 0 1-1.2 1.2H2.6a1.2 1.2 0 0 1-1.2-1.2z" fill="none" stroke="#c3c5c9" stroke-width="1.3" stroke-linejoin="round"/><circle cx="5.9" cy="9.3" r="1.7" fill="none" stroke="#c3c5c9" stroke-width="1.2"/></svg></span><span class="t" style="left:228.4px">tenant</span></div>
<div class="row" style="top:880px"><span class="chw" style="left:188.7px"><svg class="ch" viewBox="0 0 16 16"><path d="M4 6l4 4 4-4" fill="none" stroke="#aeb0b4" stroke-width="1.35" stroke-linecap="round" stroke-linejoin="round"/></svg></span><span class="icw" style="left:209.3px"><svg class="ic" viewBox="0 0 16 16"><path d="M1.4 3.9a1.2 1.2 0 0 1 1.2-1.2h3l2 2.2h5.8a1.2 1.2 0 0 1 1.2 1.2v6.3a1.2 1.2 0 0 1-1.2 1.2H2.6a1.2 1.2 0 0 1-1.2-1.2z" fill="none" stroke="#c3c5c9" stroke-width="1.3" stroke-linejoin="round"/><circle cx="5.9" cy="9.3" r="1.7" fill="none" stroke="#c3c5c9" stroke-width="1.2"/></svg></span><span class="t" style="left:228.4px">user</span></div>
<div class="row" style="top:900px"><span class="icw" style="left:227.3px"><svg class="ic" viewBox="0 0 16 16"><circle cx="8" cy="8" r="6.5" fill="#253627" stroke="#57965c" stroke-width="1.25"/><text x="8" y="11.3" text-anchor="middle" font-family="Liberation Mono, monospace" font-weight="bold" font-size="9.6" fill="#57965c">I</text></svg></span><span class="t cc" style="left:246.4px">AdminUserService</span></div>
<div class="row" style="top:920px"><span class="icw" style="left:227.3px"><svg class="ic" viewBox="0 0 16 16"><circle cx="8" cy="8" r="6.5" fill="#25324d" stroke="#548af7" stroke-width="1.25"/><text x="8" y="11.4" text-anchor="middle" font-family="Liberation Sans, sans-serif" font-size="9.6" stroke="#548af7" stroke-width="0.35" fill="#548af7">C</text></svg></span><span class="t cc" style="left:246.4px">AdminUserServiceImpl</span></div>
</div>
<div id="ed">
<div id="tabs"><div id="tab"><svg class="ic" viewBox="0 0 16 16"><circle cx="8" cy="8" r="6.5" fill="#25324d" stroke="#548af7" stroke-width="1.25"/><text x="8" y="11.4" text-anchor="middle" font-family="Liberation Sans, sans-serif" font-size="9.6" stroke="#548af7" stroke-width="0.35" fill="#548af7">C</text></svg><span class="nm">UserSaveReqVO.java</span><svg class="x" viewBox="0 0 14 14"><path d="M3.5 3.5l7 7M10.5 3.5l-7 7" stroke="#8b8e93" stroke-width="1.1" stroke-linecap="round"/></svg></div></div>
<div id="curline"></div><div id="vline"></div>
<svg class="fc" viewBox="0 0 16 16"><path d="M6 4.5L9.5 8 6 11.5" fill="none" stroke="#73777d" stroke-width="1.2" stroke-linecap="round" stroke-linejoin="round"/></svg>
<div class="ln" style="top:40px">1</div>
<div class="ln" style="top:62px">2</div>
<div class="ln" style="top:84px">3</div>
<div class="vm bl" style="top:85px"></div>
<div class="ln" style="top:106px">16</div>
<div class="ln" style="top:128px">17</div>
<div class="ln" style="top:150px">18</div>
<div class="ln cur" style="top:172px">19</div>
<div class="ln" style="top:194px">20</div>
<div class="ln" style="top:216px">21</div>
<div class="ln" style="top:238px">22</div>
<div class="ln" style="top:260px">23</div>
<div class="ln" style="top:282px">24</div>
<div class="ln" style="top:304px">25</div>
<div class="ln" style="top:326px">26</div>
<div class="ln" style="top:348px">27</div>
<div class="ln" style="top:370px">28</div>
<div class="vm g" style="top:371px"></div>
<div class="ln" style="top:392px">29</div>
<div class="ln" style="top:414px">30</div>
<div class="ln" style="top:436px">31</div>
<div class="ln" style="top:458px">32</div>
<div class="ln" style="top:480px">33</div>
<div class="vm g" style="top:481px"></div>
<div class="ln" style="top:502px">34</div>
<div class="ln" style="top:524px">35</div>
<div class="ln" style="top:546px">36</div>
<div class="ln" style="top:568px">37</div>
<div class="vm g" style="top:569px"></div>
<div class="ln" style="top:590px">38</div>
<div class="ln" style="top:612px">39</div>
<div class="ln" style="top:634px">40</div>
<div class="vm bl" style="top:635px;height:42px"></div>
<div class="ln" style="top:656px">41</div>
<div class="ln" style="top:678px">42</div>
<div class="ln" style="top:700px">43</div>
<div class="ln" style="top:722px">44</div>
<div class="ln" style="top:744px">45</div>
<div class="vm g" style="top:745px"></div>
<div class="ln" style="top:766px">46</div>
<div class="ln" style="top:788px">47</div>
<div class="ln" style="top:810px">48</div>
<div class="ln" style="top:832px">49</div>
<div class="ln" style="top:854px">50</div>
<div class="ln" style="top:876px">51</div>
<div class="vm g" style="top:877px"></div>
<div class="ln" style="top:898px">52</div>
<div class="ln" style="top:920px">53</div>
<div class="box" style="left:601.9px;top:363.1px;width:248.6px;height:35.8px"></div>
<div class="box" style="left:600px;top:477.6px;width:255.9px;height:26.9px"></div>
<div class="box" style="left:603.3px;top:568.3px;width:260.4px;height:28.4px"></div>
<div class="box" style="left:601.5px;top:656px;width:500.3px;height:29.6px"></div>
<div class="box" style="left:599.9px;top:742.2px;width:505.3px;height:27.8px"></div>
<div class="cl" style="top:40px"><span class="k">package</span> cn.iocoder.yudao.module.system.controller.admin.user.vo.user<span class="k">;</span></div>
<div class="cl" style="top:62px"></div>
<div class="cl" style="top:84px"><span class="k">import</span> <span class="fold">...</span></div>
<div class="cl" style="top:106px"></div>
<div class="cl" style="top:128px"><span class="a">@Schema</span>(description = <span class="s">"管理后台 - 用户创建/修改 Request VO"</span>)</div>
<div class="cl" style="top:150px"><span class="a">@Data</span></div>
<div class="cl" style="top:172px"><span class="k">public class </span><span class="hl">UserSaveReqVO</span> {</div>
<div class="cl" style="top:194px"></div>
<div class="cl" style="top:216px">    <span class="a">@Schema</span>(description = <span class="s">"用户编号"</span><span class="k">,</span> example = <span class="s">"1024"</span>)</div>
<div class="cl" style="top:238px">    <span class="k">private</span> Long <span class="f">id</span><span class="k">;</span></div>
<div class="cl" style="top:260px"></div>
<div class="cl" style="top:282px">    <span class="a">@Schema</span>(description = <span class="s">"用户账号"</span><span class="k">,</span> requiredMode = <span class="a">Schema</span>.RequiredMode.<span class="c">REQUIRED</span><span class="k">,</span> example = <span class="s">"yudao"</span>)</div>
<div class="cl" style="top:304px">    <span class="a">@NotBlank</span>(message = <span class="s">"用户账号不能为空"</span>)</div>
<div class="cl" style="top:326px">    <span class="a">@Pattern</span>(regexp = <span class="s">"</span><span class="rx"><span class="k">^</span><span class="rb">[</span><span class="s">a-zA-Z0-9</span><span class="rb">]{</span><span class="n">4</span><span class="k">,</span><span class="n">30</span><span class="rb">}</span><span class="k">$</span></span><span class="s">"</span><span class="k">,</span> message = <span class="s">"用户账号由 数字、字母 组成"</span>)</div>
<div class="cl" style="top:348px">    <span class="a">@Size</span>(min = <span class="n">4</span><span class="k">,</span> max = <span class="n">30</span><span class="k">,</span> message = <span class="s">"用户账号长度为 4-30 个字符"</span>)</div>
<div class="cl top" style="top:370px">    <span class="a">@DiffLogField</span>(name = <span class="s">"用户账号"</span>)</div>
<div class="cl" style="top:392px">    <span class="k">private</span> String <span class="f">username</span><span class="k">;</span></div>
<div class="cl" style="top:414px"></div>
<div class="cl" style="top:436px">    <span class="a">@Schema</span>(description = <span class="s">"用户昵称"</span><span class="k">,</span> requiredMode = <span class="a">Schema</span>.RequiredMode.<span class="c">REQUIRED</span><span class="k">,</span> example = <span class="s">"芋艿"</span>)</div>
<div class="cl" style="top:458px">    <span class="a">@Size</span>(max = <span class="n">30</span><span class="k">,</span> message = <span class="s">"用户昵称长度不能超过30个字符"</span>)</div>
<div class="cl top" style="top:480px">    <span class="a">@DiffLogField</span>(name = <span class="s">"用户昵称"</span>)</div>
<div class="cl" style="top:502px">    <span class="k">private</span> String <span class="f">nickname</span><span class="k">;</span></div>
<div class="cl" style="top:524px"></div>
<div class="cl" style="top:546px">    <span class="a">@Schema</span>(description = <span class="s">"备注"</span><span class="k">,</span> example = <span class="s">"我是一个用户"</span>)</div>
<div class="cl top" style="top:568px">    <span class="a">@DiffLogField</span>(name = <span class="s">"备注"</span>)</div>
<div class="cl" style="top:590px">    <span class="k">private</span> String <span class="f">remark</span><span class="k">;</span></div>
<div class="cl" style="top:612px"></div>
<div class="cl" style="top:634px">    <span class="a">@Schema</span>(description = <span class="s">"部门编号"</span><span class="k">,</span> example = <span class="s">"我是一个用户"</span>)</div>
<div class="cl top" style="top:656px">    <span class="a">@DiffLogField</span>(name = <span class="s">"部门"</span><span class="k">,</span> function = DeptParseFunction.<span class="c">NAME</span>)</div>
<div class="cl" style="top:678px">    <span class="k">private</span> Long <span class="f">deptId</span><span class="k">;</span></div>
<div class="cl" style="top:700px"></div>
<div class="cl" style="top:722px">    <span class="a">@Schema</span>(description = <span class="s">"岗位编号数组"</span><span class="k">,</span> example = <span class="s">"1"</span>)</div>
<div class="cl top" style="top:744px">    <span class="a">@DiffLogField</span>(name = <span class="s">"岗位"</span><span class="k">,</span> function = PostParseFunction.<span class="c">NAME</span>)</div>
<div class="cl" style="top:766px">    <span class="k">private</span> Set&lt;Long&gt; <span class="f">postIds</span><span class="k">;</span></div>
<div class="cl" style="top:788px"></div>
<div class="cl" style="top:810px">    <span class="a">@Schema</span>(description = <span class="s">"用户邮箱"</span><span class="k">,</span> example = <span class="s">"yudao@iocoder.cn"</span>)</div>
<div class="cl" style="top:832px">    <span class="a">@Email</span>(message = <span class="s">"邮箱格式不正确"</span>)</div>
<div class="cl" style="top:854px">    <span class="a">@Size</span>(max = <span class="n">50</span><span class="k">,</span> message = <span class="s">"邮箱长度不能超过 50 个字符"</span>)</div>
<div class="cl" style="top:876px">    <span class="a">@DiffLogField</span>(name = <span class="s">"用户邮箱"</span>)</div>
<div class="cl" style="top:898px">    <span class="k">private</span> String <span class="f">email</span><span class="k">;</span></div>
<div class="cl" style="top:920px"></div>
</div>
<svg id="arrows" viewBox="0 0 1361 924" fill="none" stroke="#ff3d7f" stroke-width="3.1" stroke-linecap="round" stroke-linejoin="round">
<path d="M598.6,668.0 C597.6,665.7 594.8,658.5 592.8,654.3 C590.8,650.1 589.2,646.5 586.9,642.6 C584.6,638.7 582.0,635.5 579.1,630.9 C576.2,626.3 572.5,620.3 569.4,615.3 C566.3,610.3 563.5,605.3 560.5,600.8 C557.5,596.2 553.6,591.5 551.3,588.0 C549.0,584.5 548.6,583.4 546.8,580.0 C545.0,576.6 542.6,571.3 540.7,567.5 C538.8,563.7 537.2,560.3 535.5,557.1 C533.8,553.9 532.0,551.4 530.3,548.5 C528.6,545.6 526.8,542.7 525.1,539.8 C523.4,536.9 521.8,534.2 519.9,531.2 C518.0,528.2 516.1,524.9 513.9,521.6 C511.7,518.3 509.0,514.9 506.9,511.3 C504.8,507.7 504.4,505.2 501.3,500.0 C498.2,494.8 492.3,485.9 488.5,479.8 C484.7,473.7 480.9,467.6 478.5,463.5 C476.1,459.4 475.0,456.4 474.3,455.0 M474.3,455.0 C473.3,454.5 470.9,453.3 468.3,451.8 C465.8,450.3 462.3,448.4 459.0,446.2 C455.7,444.0 452.2,441.1 448.6,438.8 C445.0,436.5 440.5,434.4 437.3,432.6 C434.1,430.9 432.4,429.9 429.5,428.3 C426.6,426.7 422.6,424.6 420.0,422.8 C417.4,421.0 415.9,419.3 414.0,417.6 C412.1,415.9 410.8,415.0 408.9,412.6 C407.0,410.2 404.7,406.0 402.9,403.5 C401.1,401.0 400.1,398.9 398.3,397.4 C396.5,395.9 393.6,395.0 392.0,394.3 C390.4,393.6 389.1,393.5 388.5,393.3"/><path d="M593.2,756.2 C592.5,755.3 590.9,753.8 588.9,750.8 C586.9,747.8 584.0,743.1 581.1,738.1 C578.2,733.1 574.5,726.5 571.3,720.6 C568.0,714.8 564.8,708.9 561.6,703.0 C558.4,697.1 554.8,690.4 551.9,685.5 C549.0,680.6 546.7,677.2 544.1,673.8 C541.5,670.4 539.2,668.2 536.3,665.0 C533.4,661.8 529.8,658.0 526.5,654.3 C523.2,650.6 520.0,646.8 516.8,642.6 C513.5,638.4 509.9,633.5 507.0,629.0 C504.1,624.5 501.4,620.0 499.2,615.3 C497.0,610.6 495.5,605.2 493.9,601.0 C492.3,596.8 491.0,594.0 489.5,590.3 C488.0,586.5 486.3,582.2 485.0,578.5 C483.7,574.8 483.0,571.9 481.6,568.1 C480.2,564.4 478.4,560.5 476.4,556.0 C474.4,551.5 471.1,545.3 469.4,541.3 C467.7,537.3 467.4,535.1 466.0,531.8 C464.6,528.5 463.0,525.6 460.8,521.4 C458.6,517.2 455.9,511.6 453.0,506.7 C450.1,501.8 445.7,495.8 443.5,491.9 C441.3,488.0 442.4,487.7 440.0,483.5 C437.6,479.3 433.0,472.2 429.3,466.6 C425.6,461.0 421.0,454.6 418.0,450.0 C415.0,445.4 413.5,442.3 411.2,439.1 C408.9,435.9 406.8,433.3 404.4,430.8 C402.0,428.3 398.5,425.4 396.8,423.9 C395.1,422.3 395.5,421.9 394.0,421.5 C392.5,421.1 390.0,421.6 387.7,421.3 C385.4,421.0 382.1,420.1 380.2,419.6 C378.3,419.2 376.9,418.8 376.2,418.6"/><path d="M388.6,393.7 L406.6,395.5" stroke-width="3.2"/><path d="M389.5,393.8 L389.8,405.2" stroke-width="4"/><path d="M376.6,418.4 L387.4,414.9" stroke-width="3.6"/><path d="M376.6,419.2 L383.2,431" stroke-width="3.3"/></svg>
</body></html>
